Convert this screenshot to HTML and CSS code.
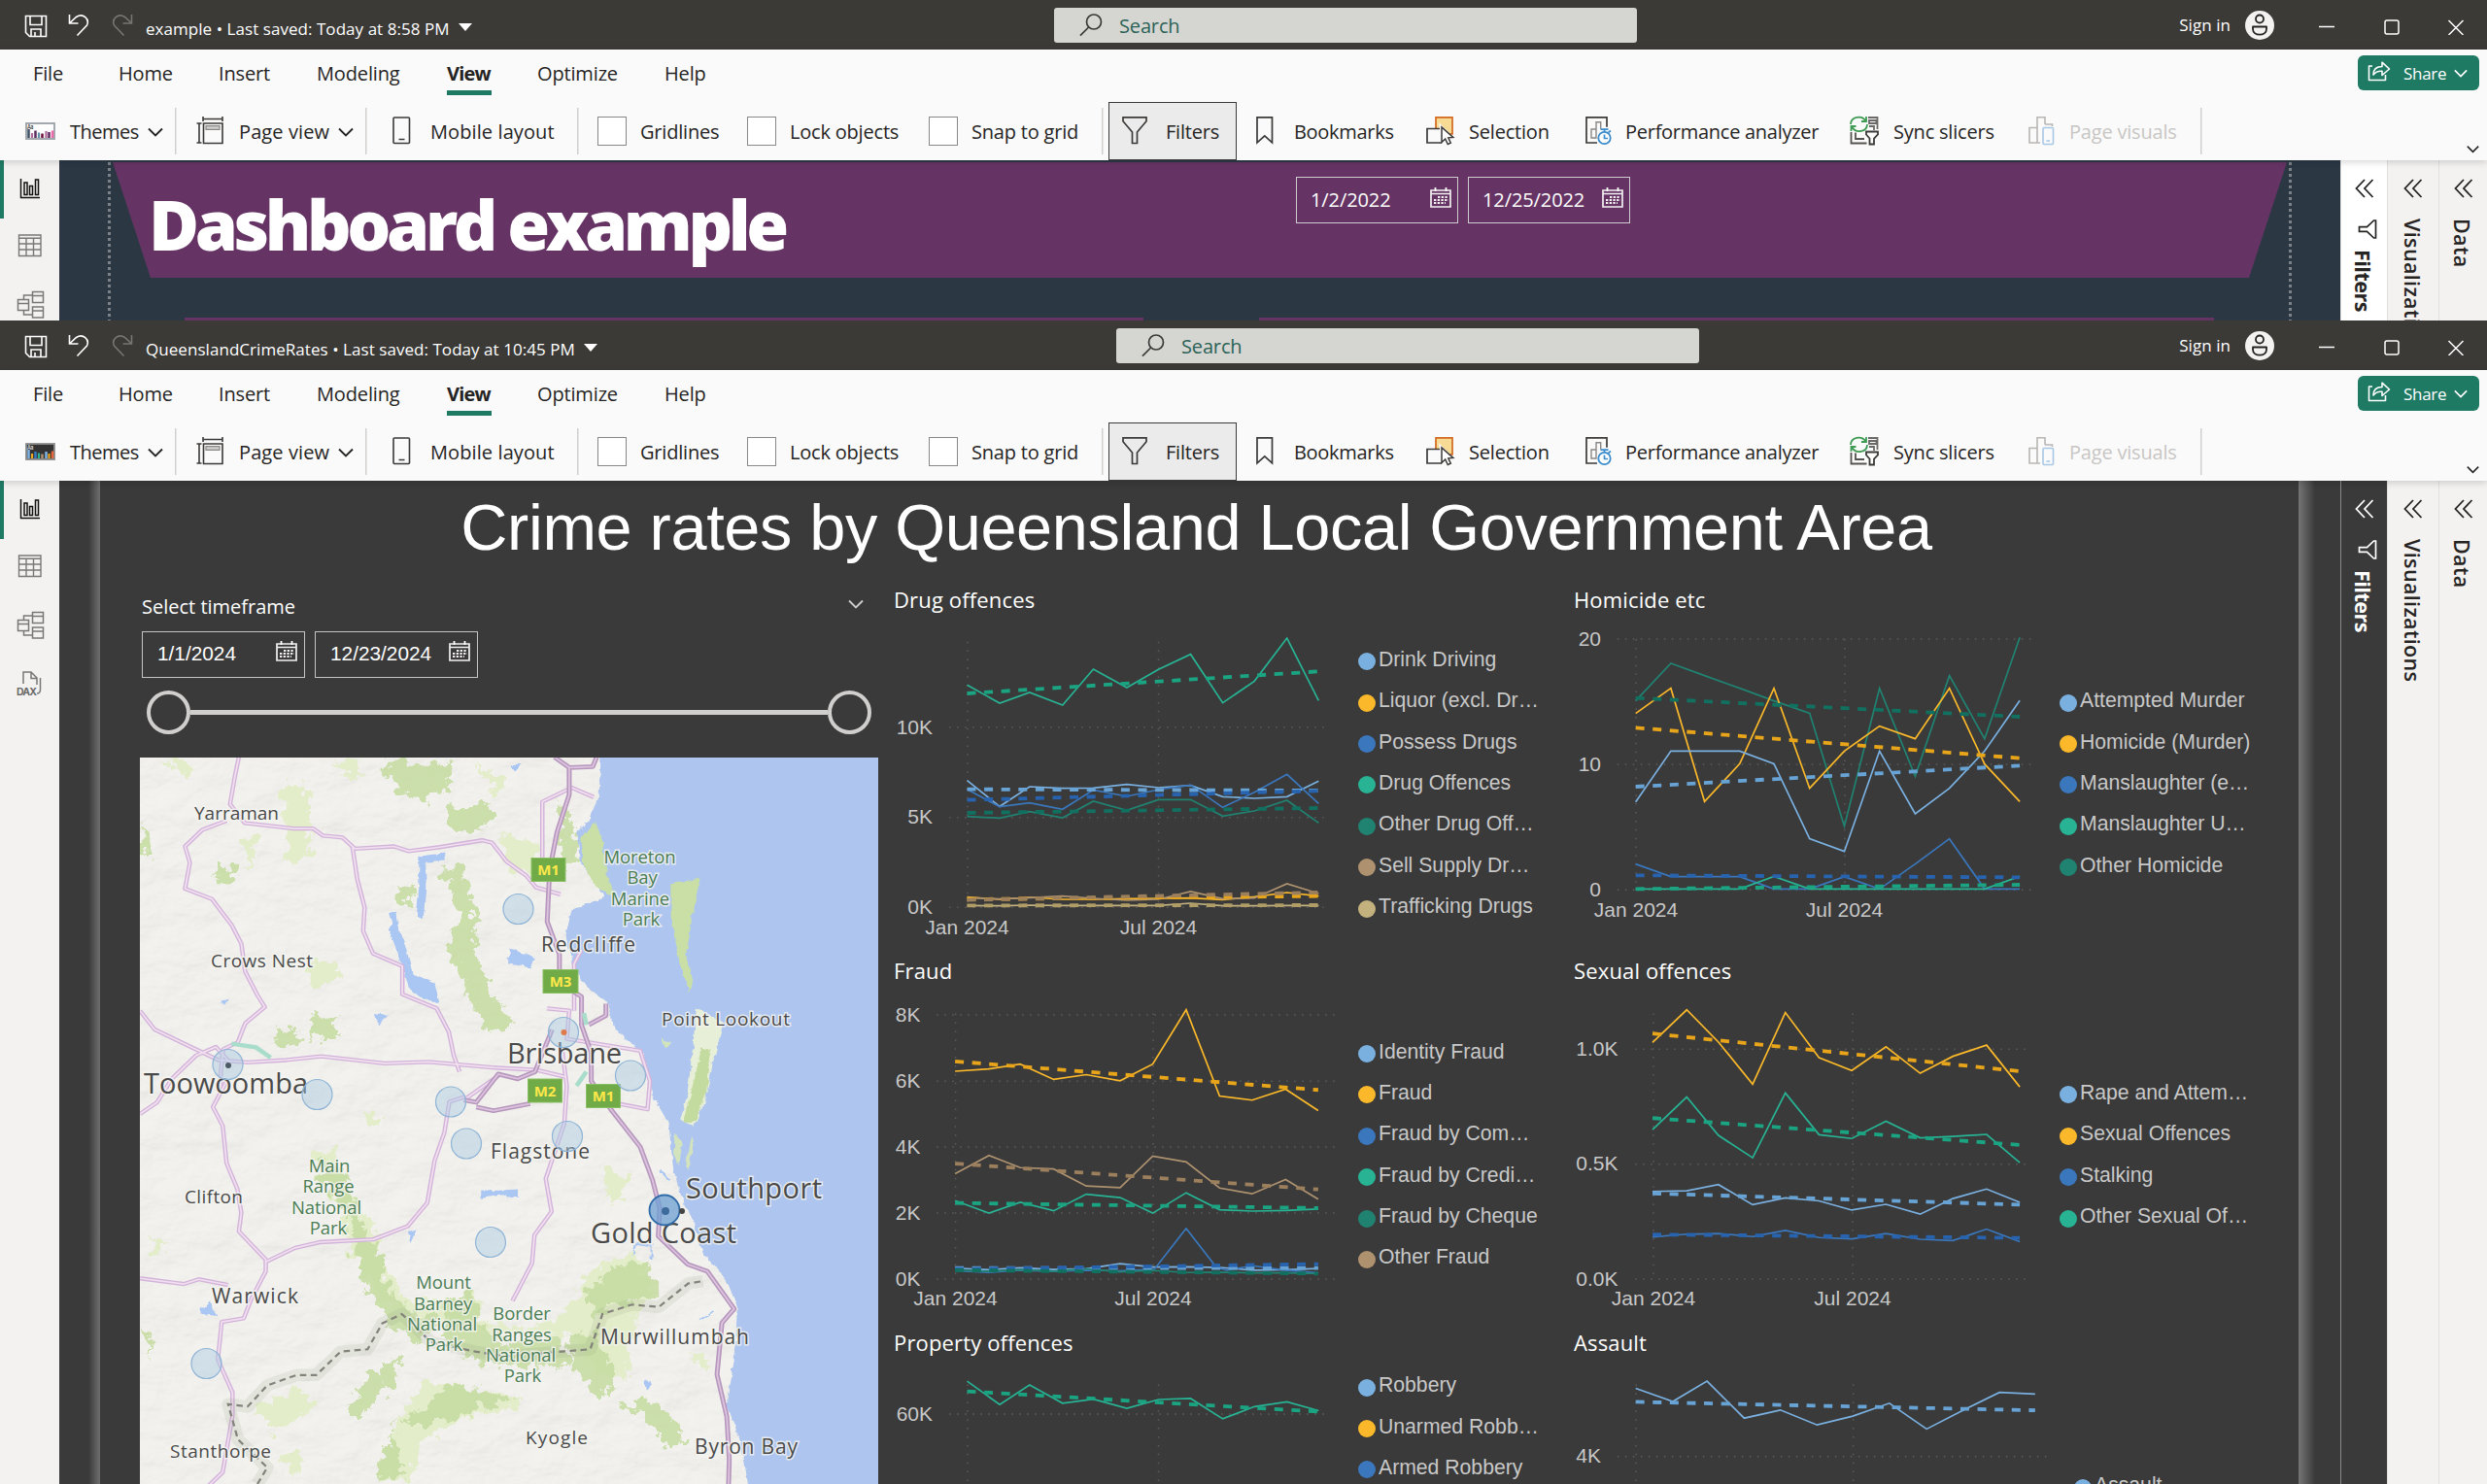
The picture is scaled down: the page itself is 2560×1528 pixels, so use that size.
FILE: index.html
```html
<!DOCTYPE html>
<html lang="en">
<head>
<meta charset="utf-8">
<title>QueenslandCrimeRates</title>
<link rel="stylesheet" href="styles.css">
</head>
<body>
<svg class="defs" width="0" height="0" aria-hidden="true">
  <symbol id="i-save" viewBox="0 0 24 24"><path d="M1.5 1.5h21v21h-17l-4-4zM6 1.500v9h12v-9M7 22v-7h10v7M11 18v4" fill="none" stroke="currentColor" stroke-width="1.600"/></symbol>
  <symbol id="i-undo" viewBox="0 0 22 24"><path d="M1.500 1v9h9M1.500 10l7-6.500c7-4.500 14 2 11 8.500L9.500 22.500" fill="none" stroke="currentColor" stroke-width="1.600"/></symbol>
  <symbol id="i-search" viewBox="0 0 24 24"><circle cx="15" cy="8.500" r="7.500" fill="none" stroke="currentColor" stroke-width="1.700"/><path d="M9.600 14L1 22.700" stroke="currentColor" stroke-width="1.700"/></symbol>
  <symbol id="i-user" viewBox="0 0 30 30"><circle cx="15" cy="15" r="15" fill="#f3f2f1"/><circle cx="15" cy="8.500" r="4" fill="none" stroke="#222" stroke-width="1.800"/><path d="M8 16.500h14v2.500c0 7.500-14 7.500-14 0z" fill="none" stroke="#222" stroke-width="1.800" stroke-linejoin="round"/></symbol>
  <symbol id="i-chev" viewBox="0 0 16 10"><path d="M1 1.500l7 7 7-7" fill="none" stroke="currentColor" stroke-width="1.900"/></symbol>
  <symbol id="i-share" viewBox="0 0 24 22"><path d="M5 6H1.500v14.500h17V15M6 15c0-6 4-8.500 9-8.500V2.200L22.500 9 15 15.500v-4.200c-4-.3-7 1-9 3.700z" fill="none" stroke="currentColor" stroke-width="1.600" stroke-linejoin="round"/></symbol>
  <symbol id="i-page" viewBox="0 0 32 32"><g fill="none" stroke="#3b3a39" stroke-width="1.600"><path d="M7 1v5M27 1v5M7 3.500h20M.5 8h5M.5 28h5M3 8v20"/><path d="M7.500 8h19.500v20.500H7.500z"/><path d="M10 10.700h14v3.600H10z" stroke="#8a8886" fill="#d2d0ce" stroke-width="1.200"/></g></symbol>
  <symbol id="i-mobile" viewBox="0 0 32 32"><rect x="1" y="2" width="16.500" height="26.500" rx="1" fill="none" stroke="#3b3a39" stroke-width="1.600"/><path d="M6.500 24.500h6" stroke="#3b3a39" stroke-width="1.500"/></symbol>
  <symbol id="i-funnel" viewBox="0 0 32 32"><path d="M1 1.800h24v4L15.500 17v11.500h-5V17L1 5.800z" fill="none" stroke="#3b3a39" stroke-width="1.700"/></symbol>
  <symbol id="i-bookmark" viewBox="0 0 32 32"><path d="M1 1.800h15.500v26l-7.700-7-7.800 7z" fill="none" stroke="#3b3a39" stroke-width="1.700"/></symbol>
  <symbol id="i-select" viewBox="0 0 32 32"><path d="M10 1.800h17v17H10z" fill="#f7da94" stroke="#d2691e" stroke-width="1.700"/><path d="M1 13.500h17V28H1z" fill="#fafafa" stroke="#3b3a39" stroke-width="1.700"/><path d="M13 7l17 17-4 2 2 5h-5l-1.500-3-5 3z" fill="#fafafa"/><path d="M16 12v15.500l3.700-3.500 2.600 5.500 3-1.300-2.500-5.400 5-.4z" fill="#fff" stroke="#3b3a39" stroke-width="1.500"/></symbol>
  <symbol id="i-perf" viewBox="0 0 32 32"><path d="M12 28H1V1.800h21v10" fill="none" stroke="#3b3a39" stroke-width="1.700"/><path d="M11 23H6v-9h5zM11 23V6.700h4.700v7" fill="none" stroke="#8a8886" stroke-width="1.400"/><circle cx="19.500" cy="23" r="6.200" fill="#fff" stroke="#3a8ccc" stroke-width="1.800"/><path d="M15.500 14.200h8M19.500 14v3M19.500 19.500v4h3.500M23.500 17.500l2.500-2" fill="none" stroke="#3a8ccc" stroke-width="1.700"/></symbol>
  <symbol id="i-sync" viewBox="0 0 32 32"><g fill="none" stroke-width="1.800"><path d="M19 2h9.500v12M20 5h7.500v3H20zM20 11h5v4" stroke="#6b6967"/><path d="M1.500 17v11.500h16M6 17.500V24h9" stroke="#55534f"/><path d="M17 16.500h12v3l-4 4v6h-4.500v-6l-3.500-4z" fill="#fff" stroke="#3b3a39"/><path d="M17 1v5h-5M1 9c0-8 11.500-10 15.500-3.500M1.500 16v-5h5M18 9c0 8-11.500 9.500-15.500 3" stroke="#3f9b54"/></g></symbol>
  <symbol id="i-visuals" viewBox="0 0 32 32"><g fill="none" stroke-width="1.600"><path d="M9 12.500H1V28h11M9 28V1.800h8V9M17 9h7.500v2" stroke="#b8b6b4"/><rect x="15" y="12.500" width="10.500" height="17" rx="1" stroke="#a9c8e6"/><path d="M18.500 26h3.500" stroke="#a9c8e6"/></g></symbol>
  <symbol id="i-report" viewBox="0 0 28 28"><path d="M4.500 4v19.500H24M8 8v12.500h3V8zM13.500 11.500v9h3v-9zM19.500 5v15.500h3V5z" fill="none" stroke="#111" stroke-width="1.500"/></symbol>
  <symbol id="i-table" viewBox="0 0 28 28"><path d="M2.500 4h22.500v21.500H2.500zM2.500 7.200H25M2.500 13H25M2.500 19H25M10 7.200v18.300M17.500 7.200v18.300" fill="none" stroke="#7a7876" stroke-width="1.400"/></symbol>
  <symbol id="i-model" viewBox="0 0 30 30"><path d="M16.500 1.500h11v11h-11zM16.500 5.500h11M16.500 17h11v11h-11zM16.500 21h11M1.500 9.500h11v11h-11zM1.500 13.500h11M7.500 9.500V5h9M7.500 20.500V25h9" fill="none" stroke="#7a7876" stroke-width="1.500"/></symbol>
  <symbol id="i-collapse" viewBox="0 0 20 20"><path d="M10 1L1.500 10l8.500 9M18.500 1L10 10l8.500 9" fill="none" stroke="currentColor" stroke-width="1.800"/></symbol>
  <symbol id="i-funnel-side" viewBox="0 0 20 20"><path d="M18.500 1v18h-2L9.500 12.300H1.500V7.700h8L16.500 1z" fill="none" stroke="currentColor" stroke-width="1.700"/></symbol>
  <symbol id="i-cal" viewBox="0 0 22 21"><path d="M1 3h20v17H1z" fill="none" stroke="#f3f1f1" stroke-width="1.700"/><path d="M1 6.500h20" stroke="#f3f1f1" stroke-width="1.500"/><path d="M5.500 0v4M16.500 0v4" stroke="#fff" stroke-width="1.800"/><path d="M8 10h11M4 13h15M4 16h12" stroke="#f3f1f1" stroke-width="2" stroke-dasharray="2.300 1.400"/></symbol>
</svg>

<section class="window window-back">
  <header class="titlebar">
    <svg class="t-save"><use href="#i-save"/></svg><svg class="t-undo"><use href="#i-undo"/></svg><svg class="t-redo"><use href="#i-undo"/></svg>
    <div class="doc">example • Last saved: Today at 8:58 PM<i class="tri"></i></div>
    <div class="search"><svg><use href="#i-search"/></svg>Search</div>
    <div class="account">Sign in<svg><use href="#i-user"/></svg></div>
    <svg class="winctl" viewBox="0 0 150 16"><path d="M1 7.500h16M134.500 1l15 15M149.500 1l-15 15" /><rect x="69" y="1" width="14" height="14" rx="2"/></svg>
  </header>
  <div class="ribbon">
    <nav class="tabs"><a class="file">File</a><a class="home">Home</a><a class="insert">Insert</a><a class="modeling">Modeling</a><a class="view">View</a><a class="optimize">Optimize</a><a class="help">Help</a>
      <button class="share"><svg><use href="#i-share"/></svg>Share<svg class="chev"><use href="#i-chev"/></svg></button></nav>
    <div class="tools">
      <div class="tool themes"><svg viewBox="0 0 31 18"><rect x="1" y="1" width="29" height="16" fill="#fff" stroke="#9aa0a6" stroke-width="1.800"/><path d="M3.500 16V7" stroke="#3c5063" stroke-width="2.500"/><path d="M7 16v-5M21.500 16v-7" stroke="#b06a9a" stroke-width="2.200"/><path d="M10.500 16V8.500M24.500 16v-6" stroke="#5d2d5f" stroke-width="2.500"/><path d="M14 16v-5.500" stroke="#5f8fa8" stroke-width="2.200"/><path d="M17.500 16v-4.500" stroke="#6e0f3a" stroke-width="2.500"/><path d="M28 16V8.500" stroke="#f068a8" stroke-width="2.500"/><text x="2" y="6.500" font-size="5.500" font-family="Inter">Aa</text></svg><span>Themes</span><svg class="chev"><use href="#i-chev"/></svg></div>
      <div class="tool pageview sep"><svg><use href="#i-page"/></svg><span>Page view</span><svg class="chev"><use href="#i-chev"/></svg></div>
      <div class="tool mobile sep"><svg><use href="#i-mobile"/></svg><span>Mobile layout</span></div>
      <div class="tool check sep"><i class="box"></i><span>Gridlines</span></div>
      <div class="tool check"><i class="box"></i><span>Lock objects</span></div>
      <div class="tool check"><i class="box"></i><span>Snap to grid</span></div>
      <div class="tool sep"></div>
      <div class="tool filters"><svg><use href="#i-funnel"/></svg><span>Filters</span></div>
      <div class="tool bookmarks"><svg><use href="#i-bookmark"/></svg><span>Bookmarks</span></div>
      <div class="tool selection"><svg><use href="#i-select"/></svg><span>Selection</span></div>
      <div class="tool perf"><svg><use href="#i-perf"/></svg><span>Performance analyzer</span></div>
      <div class="tool sync"><svg><use href="#i-sync"/></svg><span>Sync slicers</span></div>
      <div class="tool visuals"><svg><use href="#i-visuals"/></svg><span>Page visuals</span></div>
      <div class="tool sep last"><svg class="chev"><use href="#i-chev"/></svg></div>
    </div>
  </div>
  <div class="work">
    <aside class="rail"><svg><use href="#i-report"/></svg><svg><use href="#i-table"/></svg><svg class="wide"><use href="#i-model"/></svg></aside>
    <main class="stage stage-blue">
      <div class="sheet">
        <div class="banner">
          <h1>Dashboard example</h1>
          <div class="dates"><div class="date">1/2/2022<svg><use href="#i-cal"/></svg></div><div class="date">12/25/2022<svg><use href="#i-cal"/></svg></div></div>
        </div>
        <div class="strips"><i></i><i></i></div>
      </div>
    </main>
    <aside class="pane pane-filters"><svg><use href="#i-collapse"/></svg><svg class="fn"><use href="#i-funnel-side"/></svg><span>Filters</span></aside>
    <aside class="pane pane-viz"><svg><use href="#i-collapse"/></svg><span>Visualizations</span></aside>
    <aside class="pane pane-data"><svg><use href="#i-collapse"/></svg><span>Data</span></aside>
  </div>
</section>

<section class="window window-front">
  <header class="titlebar">
    <svg class="t-save"><use href="#i-save"/></svg><svg class="t-undo"><use href="#i-undo"/></svg><svg class="t-redo"><use href="#i-undo"/></svg>
    <div class="doc">QueenslandCrimeRates • Last saved: Today at 10:45 PM<i class="tri"></i></div>
    <div class="search"><svg><use href="#i-search"/></svg>Search</div>
    <div class="account">Sign in<svg><use href="#i-user"/></svg></div>
    <svg class="winctl" viewBox="0 0 150 16"><path d="M1 7.500h16M134.500 1l15 15M149.500 1l-15 15" /><rect x="69" y="1" width="14" height="14" rx="2"/></svg>
  </header>
  <div class="ribbon">
    <nav class="tabs"><a class="file">File</a><a class="home">Home</a><a class="insert">Insert</a><a class="modeling">Modeling</a><a class="view">View</a><a class="optimize">Optimize</a><a class="help">Help</a>
      <button class="share"><svg><use href="#i-share"/></svg>Share<svg class="chev"><use href="#i-chev"/></svg></button></nav>
    <div class="tools">
      <div class="tool themes"><svg viewBox="0 0 31 18"><rect x="1" y="1" width="29" height="16" fill="#333" stroke="#8c8c8c" stroke-width="1.800"/><path d="M3.500 16V7M21.500 16v-7" stroke="#7fb2e5" stroke-width="2.500"/><path d="M7 16v-5M24.500 16v-5" stroke="#e9a820" stroke-width="2.200"/><path d="M10.500 16V9" stroke="#3a78c0" stroke-width="2.500"/><path d="M14 16v-5.500" stroke="#2bb594" stroke-width="2.200"/><path d="M17.500 16v-4.500" stroke="#b09372" stroke-width="2.500"/><path d="M28 16V8.500" stroke="#e8663c" stroke-width="2.500"/><text x="2" y="6.500" font-size="5.500" font-family="Inter" fill="#fff">Aa</text></svg><span>Themes</span><svg class="chev"><use href="#i-chev"/></svg></div>
      <div class="tool pageview sep"><svg><use href="#i-page"/></svg><span>Page view</span><svg class="chev"><use href="#i-chev"/></svg></div>
      <div class="tool mobile sep"><svg><use href="#i-mobile"/></svg><span>Mobile layout</span></div>
      <div class="tool check sep"><i class="box"></i><span>Gridlines</span></div>
      <div class="tool check"><i class="box"></i><span>Lock objects</span></div>
      <div class="tool check"><i class="box"></i><span>Snap to grid</span></div>
      <div class="tool sep"></div>
      <div class="tool filters"><svg><use href="#i-funnel"/></svg><span>Filters</span></div>
      <div class="tool bookmarks"><svg><use href="#i-bookmark"/></svg><span>Bookmarks</span></div>
      <div class="tool selection"><svg><use href="#i-select"/></svg><span>Selection</span></div>
      <div class="tool perf"><svg><use href="#i-perf"/></svg><span>Performance analyzer</span></div>
      <div class="tool sync"><svg><use href="#i-sync"/></svg><span>Sync slicers</span></div>
      <div class="tool visuals"><svg><use href="#i-visuals"/></svg><span>Page visuals</span></div>
      <div class="tool sep last"><svg class="chev"><use href="#i-chev"/></svg></div>
    </div>
  </div>
  <div class="work">
    <aside class="rail"><svg><use href="#i-report"/></svg><svg><use href="#i-table"/></svg><svg class="wide"><use href="#i-model"/></svg><svg class="dax" viewBox="0 0 28 28"><path d="M7 14V2h8l6 6v7M15 2v6.500h6M24.500 8v12c0 2.500-1 4-3.500 4" fill="none" stroke="#7a7876" stroke-width="1.500"/><text x="0" y="26" font-family="Inter, sans-serif" font-size="10.500" font-weight="700" fill="#6b6967" textLength="21">DAX</text></svg></aside>
    <main class="stage stage-dark">
      <div class="report">
        <h1>Crime rates by Queensland Local Government Area</h1>
        <div class="body">
          <div class="left">
            <div class="slicer-head">Select timeframe<svg class="chev"><use href="#i-chev"/></svg></div>
            <div class="dates"><div class="date">1/1/2024<svg><use href="#i-cal"/></svg></div><div class="date">12/23/2024<svg><use href="#i-cal"/></svg></div></div>
            <div class="slider"><i class="knob"></i><i class="track"></i><i class="knob"></i></div>
            <svg class="map" viewBox="144 780 760 748">
              <defs>
                <filter id="rough" x="-5%" y="-5%" width="110%" height="110%"><feTurbulence type="fractalNoise" baseFrequency=".045" numOctaves="5" seed="4"/><feDisplacementMap in="SourceGraphic" scale="52" xChannelSelector="R" yChannelSelector="G"/><feGaussianBlur stdDeviation="1.500"/></filter>
                <filter id="coast" x="-5%" y="-5%" width="110%" height="110%"><feTurbulence type="fractalNoise" baseFrequency=".06" numOctaves="3" seed="8"/><feDisplacementMap in="SourceGraphic" scale="11" xChannelSelector="R" yChannelSelector="G"/></filter>
                <filter id="relief" x="0" y="0" width="100%" height="100%"><feTurbulence type="fractalNoise" baseFrequency=".018 .028" numOctaves="5" seed="11" result="n"/><feDiffuseLighting in="n" surfaceScale="5" diffuseConstant="1.050" lighting-color="#f4f4f0"><feDistantLight azimuth="235" elevation="68"/></feDiffuseLighting></filter>
              </defs>
              <rect x="144" y="780" width="760" height="748" fill="#f1f0ec"/>
              <rect x="144" y="780" width="760" height="748" filter="url(#relief)" opacity=".25"/>
              <g transform="translate(130 770) scale(.5038 .4834)">
                <g filter="url(#rough)" fill="#e3edc9">
                  <path d="M320 70l50 10 10 150-50 10-10-80zM80 30l60-5-10 40zM420 30l60-5-10 50zM760 180l80 20 10 80-70-20zM360 470l60-20 20 40-50 20zM480 770l50 20-20 30zM980 890l40 20-10 60-30-10zM240 190l30 0-20 70zM720 40l60 30-30 30z"/>
                  <path d="M370 850l60 10 30 90 50 80 20 90 60 60 130-20 0 60 110 20 70-40 40-80 90-50 40 60-30 110-20 110-50-20-60-80-120 0-130-20-130-50-60-80-40-120z"/>
                  <path d="M260 1400l90-30 40 30-90 60zM310 1500l60 10-20 50zM1150 1290l40 0-5 40zM50 1040l30 20-20 20zM610 1350l150 20 60 30-120 20-100 60-20 80-60 0 20-100z"/>
                </g>
                <g filter="url(#rough)" fill="#c5dca0" opacity=".85">
                  <path d="M530 30h140l-15 60-50 20-70-30zM655 125l90-5 0 50-50 10-40-20zM30 160l22 30-4 40-20 0zM180 250l50 0-20 45-30-10z"/>
                  <path d="M640 255l45 0 25 80 5 110 40 90 40 55-60 15-30-60-30-80-25-40 30-50-10-60z"/>
                  <path d="M375 575l55-5 5 45-60 10zM305 595l50 10 0 30-50-5zM555 290l35 10-10 40-25-5z"/>
                  <path d="M395 880l45 10 20 60 30 90 30 30 10 80 50 50 60 20-40 50-60-40-60-90-20-130-60-90z"/>
                  <path d="M650 1170l60-10 10 60 50 50 50-10 60-10 30 60-60 10-130-10-70-50zM930 1160l80-60 60 0 20 60-70 20-60 30zM900 1260l60-20 40 100-30 50-50-60z"/>
                  <path d="M500 1330l60-30-20 60-70 70-20-20zM545 1440l20 110-50 10zM650 1360l60 0 80 30-80 20-80 30-70 0zM1015 1400l70-10 55 70-30 30-60-70z"/>
                  <path d="M1110 1290l10-30M880 110l40 60 0 80-25 0-10-70zM40 1240l20 20-15 40z"/>
                </g>
                <g filter="url(#coast)">
                  <path fill="#aec6ef" d="M970 10L966 100 948 150 922 180 926 240 960 290 978 318 910 345 898 400 912 460 940 510 985 545 1000 600 1055 650 1075 740 1108 800 1118 900 1135 960 1155 1000 1180 1080 1225 1130 1248 1190 1245 1280 1228 1400 1258 1490 1272 1580H1580V10z"/>
                  <path fill="none" stroke="#aac6f2" stroke-width="14" d="M650 232l-45 5 0 60-5 65M545 350l10 60 20 60"/>
                  <path fill="#aac6f2" d="M535 385l15-15 20 50 15 60 45 20 10 45-35-10-30-25-15-60zM785 425l20 10 30 15-10 18-45-8zM508 565l27 5-20 20zM152 1195l20-15 15 30-35-5zM725 945l75-5 0 20-30-8-45 8zM575 1030l20-5-15 30zM785 35l22 0-12 15zM190 540l20-5-10 12zM1060 1345l14 10-10 15z"/>
                  <path fill="none" stroke="#aac6f2" stroke-width="4" d="M1035 1080l8-25 30 5 0 30M1170 1220l30-20M1090 900l20 20"/>
                </g>
                <g filter="url(#coast)" fill="#c9dfa6">
                  <path d="M958 155l16 45 8 70 20 50-45-25-24-50-5-50z"/>
                  <path d="M1112 290l60-12-18 95-10 70 15 60-8 18-20-60-18-100z"/>
                </g>
                <g filter="url(#coast)">
                  <path d="M1165 555l20 10 35 20-20 80-18 90-22 52-28-15 15-60 10-90z" fill="#e8efd8"/>
                  <path d="M1175 640l20 5-10 90-22 60-25 5 15-60z" fill="#c3db9f"/>
                  <path d="M1155 830l4 10-10 60-6-10zM1095 620l18 8-12 12zM1120 820l15 20-5 50-10-20z" fill="#d3e4bc"/>
                </g>
                <g class="road road-case"><g id="roads"><path d="M230 20l-8 40-10 60 30 40 100 12 40 0 20 15 40 4 25 24 80-5 30 10 60-8 90-15 20 5 30 40 40 30 20 25 50 15"/><path d="M205 155l-50 20-35 35 10 35-10 55 55 22 40 55 20 40 8 60 25 50 15 25-40 35-15 40-30 15-5 50 0 30"/><path d="M462 210l10 70 15 60-3 50 20 48 60 27 0 60 70 30 25 50 10 50 12 35"/><path d="M28 560l30 40 70 35 60 30 60 5 80-5 70-8 130 15 90-3 130 12 90 5 60 15"/><path d="M28 780l35-25 30-50 50-50 40-18 30 35M205 710l-28 55 20 40 8 80 22 55 8 50-5 40 55 60 0 25-30 60-15 40-45 8-8 80 30 70 0 50-20 120-50 50"/><path d="M28 1130l90 12 30-10 60 12M285 1095l60-30 50-12 110-6 70-28 40-50 15-90 20-60 10-65 30-10"/><path d="M690 750l75-55M890 640l10 80-5 80-38 118 12 70-35 50-5 60-40 80"/><path d="M850 240l0-125 60-30 45 20M930 430l-15 30 0 100M860 555l45 5-5 60 150 25 20 65-5 60-75-15"/></g></g>
                <g class="road"><use href="#roads"/></g>
                <g class="hwy hwy-case"><g id="hwys"><path d="M875 20l30 22 48-2 8-20M905 40l0 60-25 80-15 80-5 110 25 70 0 60 45 30 0 60 20 60 0 60 40 60 60 80 25 70 15 60-3 60 60 60 40 15 55 80-25 30-10 110 20 90 5 90-3 110"/><path d="M870 600l-35 90-35 15-40-10-45 60-25-5M715 765l35 8 75-15M945 590l35-20 0-25"/></g></g>
                <g class="hwy"><use href="#hwys"/></g>
                <path d="M215 630l50 8 30 22M935 565l5 25M940 690l-20 30" fill="none" stroke="#a8dccb" stroke-width="9"/>
                <path id="state" d="M268 1568l20-35-60-60-20-75 40 5 40-45 60-22 40 0 50-50 55-5 30-55 40-20 60 60 90 20 60 10 175-15 25-75 60-20 55 5 60-50 30-5" class="state-halo"/>
                <path d="M268 1568l20-35-60-60-20-75 40 5 40-45 60-22 40 0 50-50 55-5 30-55 40-20 60 60 90 20 60 10 175-15 25-75 60-20 55 5 60-50 30-5" class="state"/>
              </g>
              <g class="town">
                <g font-size="19"><text x="200" y="844" textLength="87">Yarraman</text><text x="217" y="996" textLength="105">Crows Nest</text><text x="190" y="1239" textLength="60">Clifton</text><text x="175" y="1501" textLength="104">Stanthorpe</text><text x="681" y="1056" textLength="132">Point Lookout</text><text x="541" y="1487" textLength="64">Kyogle</text></g>
                <g font-size="21"><text x="218" y="1342" textLength="89">Warwick</text><text x="557" y="980" textLength="97">Redcliffe</text><text x="505" y="1193" textLength="102">Flagstone</text><text x="618" y="1384" textLength="153">Murwillumbah</text><text x="715" y="1497" textLength="106">Byron Bay</text></g>
                <g font-size="29"><text x="148" y="1126" textLength="169">Toowoomba</text><text x="522" y="1095" textLength="118">Brisbane</text><text x="706" y="1234" textLength="140">Southport</text><text x="608" y="1280" textLength="150">Gold Coast</text></g>
              </g>
              <g class="park">
                <text x="658.500" y="889">Moreton</text><text x="661" y="910">Bay</text><text x="659" y="932">Marine</text><text x="660" y="953">Park</text>
                <text x="339" y="1207">Main</text><text x="338" y="1228">Range</text><text x="336" y="1250">National</text><text x="338" y="1271">Park</text>
                <text x="456.500" y="1327">Mount</text><text x="456" y="1349">Barney</text><text x="455" y="1370">National</text><text x="457" y="1391">Park</text>
                <text x="537" y="1359">Border</text><text x="537" y="1381">Ranges</text><text x="536" y="1402">National</text><text x="538" y="1423">Park</text>
              </g>
              <g class="shield"><rect x="547" y="883.500" width="35" height="24"/><rect x="559" y="998.500" width="36" height="24"/><rect x="543.500" y="1111" width="35" height="24"/><rect x="603.500" y="1116.500" width="35" height="24"/><text x="564.500" y="901">M1</text><text x="577" y="1016">M3</text><text x="561" y="1128.500">M2</text><text x="621" y="1134">M1</text></g>
              <g class="bubble"><circle cx="533.500" cy="936" r="15.500"/><circle cx="580" cy="1063" r="15.500"/><circle cx="234.500" cy="1096" r="15.500"/><circle cx="326.500" cy="1127" r="15.500"/><circle cx="464" cy="1134.500" r="15.500"/><circle cx="480" cy="1177.500" r="15.500"/><circle cx="584" cy="1170" r="15.500"/><circle cx="649" cy="1107.500" r="15.500"/><circle cx="505" cy="1279" r="15.500"/><circle cx="212.500" cy="1404" r="15.500"/><circle class="on" cx="684" cy="1246" r="15.500"/></g>
              <circle cx="580.500" cy="1063" r="3" fill="#e07b4c"/><circle cx="235" cy="1097" r="3" fill="#4c5a66"/><circle cx="685" cy="1247" r="4" fill="#3d6c9c"/><circle cx="702" cy="1247" r="3" fill="#444"/>
            </svg>
          </div>
          <div class="charts">
            <article class="card"><h2>Drug offences</h2><div class="plot">
              <svg viewBox="904 640 494 342"><g transform="translate(900 590) scale(.45918 .33333)">
                <path class="gx" d="M168 476H1020M168 755H1020M168 1033H1020"/><path class="gy" d="M209 212V1033M637 212V1033"/>
                <polyline class="l tan2" points="208,1027 281,1028 348,1026 422,1027 491,1027 566,1027 637,1027 709,1020 781,1028 852,1028 925,1027 996,1027"/>
                <polyline class="l yel" points="208,1001 281,1008 348,1002 422,1008 491,1008 566,1006 637,1005 709,1004 781,1009 852,1000 925,987 996,998"/>
                <polyline class="l tan" points="208,1003 281,1007 348,1003 422,998 491,1005 566,1011 637,1008 709,984 781,1006 852,1004 925,960 996,990"/>
                <polyline class="l grn" points="208,346 281,402 348,369 422,408 491,297 566,354 637,298 709,251 781,401 852,334 925,201 996,394"/>
                <polyline class="l lbl" points="208,641 281,721 348,660 422,665 491,664 566,653 637,663 709,656 781,691 852,696 925,691 996,643"/>
                <polyline class="l blu" points="208,668 281,722 348,710 422,730 491,670 566,690 637,669 709,655 781,724 852,677 925,622 996,712"/>
                <polyline class="l dgr" points="208,752 281,757 348,737 422,756 491,705 566,733 637,700 709,700 781,751 852,735 925,702 996,772"/>
                <path class="t lbl" d="M208 668L996 672"/><path class="t yel" d="M208 1008L996 998"/><path class="t blu" d="M208 701L996 673"/><path class="t grn" d="M208 372L996 304"/><path class="t dgr" d="M208 741L996 726"/><path class="t tan" d="M208 1010L996 987"/><path class="t tan2" d="M208 1027L996 1026"/></g>
                <g class="ax"><text class="e" x="960" y="756">10K</text><text class="e" x="960" y="848">5K</text><text class="e" x="960" y="941">0K</text><text x="995.500" y="962">Jan 2024</text><text x="1192.500" y="962">Jul 2024</text></g></svg>
              <ul class="legend"><li class="lbl">Drink Driving</li><li class="yel">Liquor (excl. Dr…</li><li class="blu">Possess Drugs</li><li class="grn">Drug Offences</li><li class="dgr">Other Drug Off…</li><li class="tan">Sell Supply Dr…</li><li class="tan2">Trafficking Drugs</li></ul>
            </div></article>
            <article class="card"><h2>Homicide etc</h2><div class="plot">
              <svg viewBox="1600 640 520 342"><g transform="translate(1600 590) scale(.5102 .33333)">
                <path class="gx" d="M127 204H963M127 591H963M127 979H963"/><path class="gy" d="M165 204V979M586 204V979"/>
                <polyline class="l dgr" points="164,395 235,279 303,317 374,356 443,395 515,433 585,782 656,356 728,628 797,317 868,512 939,199"/>
                <polyline class="l yel" points="164,434 235,356 303,706 374,589 443,356 515,665 585,550 656,473 728,512 797,356 868,590 939,706"/>
                <polyline class="l lbl" points="164,707 235,550 303,550 374,550 443,589 515,821 585,860 656,550 728,744 797,665 868,550 939,394"/>
                <polyline class="l blu" points="164,899 235,938 303,938 374,938 443,976 515,976 585,938 656,976 728,899 797,821 868,976 939,976"/>
                <polyline class="l grn" points="164,976 374,976 443,937 515,976 868,976 939,937"/>
                <path class="t lbl" d="M164 660L939 595"/><path class="t yel" d="M164 478L939 572"/><path class="t blu" d="M164 934L939 940"/><path class="t grn" d="M164 976L939 963"/><path class="t dgr" d="M164 386L939 444"/></g>
                <g class="ax"><text class="e" x="1648" y="665">20</text><text class="e" x="1648" y="794">10</text><text class="e" x="1648" y="923">0</text><text x="1684" y="944">Jan 2024</text><text x="1898.500" y="944">Jul 2024</text></g></svg>
              <ul class="legend"><li class="lbl">Attempted Murder</li><li class="yel">Homicide (Murder)</li><li class="blu">Manslaughter (e…</li><li class="grn">Manslaughter U…</li><li class="dgr">Other Homicide</li></ul>
            </div></article>
            <article class="card"><h2>Fraud</h2><div class="plot">
              <svg viewBox="904 1022 494 343"><g transform="translate(900 980) scale(.45918 .34949)">
                <path class="gx" d="M140 186H1032M140 381H1032M140 575H1032M140 770H1032M140 964H1032"/><path class="gy" d="M182 182V968M625 182V968"/>
                <polyline class="l yel" points="181,352 257,345 327,331 402,376 475,362 551,380 624,331 699,171 774,425 847,437 922,405 995,468"/>
                <polyline class="l tan" points="181,654 257,600 327,636 402,640 475,690 551,695 624,602 699,619 774,696 847,713 922,671 995,729"/>
                <polyline class="l grn" points="181,733 257,770 327,738 402,763 475,714 551,724 624,770 699,710 774,760 847,764 922,762 995,758"/>
                <polyline class="l lbl" points="181,932 257,937 327,931 402,936 475,934 551,919 624,929 699,928 774,930 847,938 922,937 995,933"/>
                <polyline class="l blu" points="181,940 257,945 327,938 402,942 475,938 551,940 628,935 699,815 767,930 790,938 847,925 922,938 995,946"/>
                <polyline class="l dgr" points="181,938 257,942 327,937 402,941 475,934 551,943 624,939 699,945 774,944 847,946 922,946 995,948"/>
                <path class="t lbl" d="M181 932L995 932"/><path class="t yel" d="M181 323L995 407"/><path class="t blu" d="M181 935L995 920"/><path class="t grn" d="M181 740L995 755"/><path class="t dgr" d="M181 938L995 948"/><path class="t tan" d="M181 624L995 700"/></g>
                <g class="ax"><text class="e" x="947.500" y="1052">8K</text><text class="e" x="947.500" y="1120">6K</text><text class="e" x="947.500" y="1188">4K</text><text class="e" x="947.500" y="1256">2K</text><text class="e" x="947.500" y="1324">0K</text><text x="983.500" y="1344">Jan 2024</text><text x="1187" y="1344">Jul 2024</text></g></svg>
              <ul class="legend"><li class="lbl">Identity Fraud</li><li class="yel">Fraud</li><li class="blu">Fraud by Com…</li><li class="grn">Fraud by Credi…</li><li class="dgr">Fraud by Cheque</li><li class="tan">Other Fraud</li></ul>
            </div></article>
            <article class="card"><h2>Sexual offences</h2><div class="plot">
              <svg viewBox="1600 1022 520 343"><g transform="translate(1600 980) scale(.5102 .34949)">
                <path class="gx" d="M163 287H963M163 626H963M163 964H963"/><path class="gy" d="M200 182V968M602 182V968"/>
                <polyline class="l yel" points="198,267 267,171 331,266 400,390 466,179 534,312 600,350 669,280 738,358 804,308 872,275 939,398"/>
                <polyline class="l grn" points="198,524 267,428 331,541 400,607 466,416 534,539 600,550 669,499 738,548 804,544 872,538 939,621"/>
                <polyline class="l lbl" points="198,706 267,704 331,686 400,745 466,725 534,734 600,761 669,744 738,773 804,727 872,699 939,738"/>
                <polyline class="l blu" points="198,840 267,832 331,830 400,839 466,821 534,842 600,846 669,830 738,847 804,851 872,817 939,854"/>
                <path class="t lbl" d="M198 712L939 745"/><path class="t yel" d="M198 241L939 352"/><path class="t blu" d="M198 833L939 843"/><path class="t grn" d="M198 490L939 569"/></g>
                <g class="ax"><text class="e" x="1665.500" y="1087">1.0K</text><text class="e" x="1665.500" y="1205">0.5K</text><text class="e" x="1665.500" y="1324">0.0K</text><text x="1702" y="1344">Jan 2024</text><text x="1907" y="1344">Jul 2024</text></g></svg>
              <ul class="legend"><li class="lbl">Rape and Attem…</li><li class="yel">Sexual Offences</li><li class="blu">Stalking</li><li class="grn">Other Sexual Of…</li></ul>
            </div></article>
            <article class="card"><h2>Property offences</h2><div class="plot">
              <svg viewBox="904 1405 494 342"><g transform="translate(900 980) scale(.45918 .34949)">
                <path class="gx" d="M168 1362H1020"/><path class="gy" d="M209 1275V2100M637 1275V2100"/>
                <polyline class="l grn" points="208,1265 281,1334 348,1276 422,1330 491,1318 566,1345 637,1319 709,1316 781,1376 852,1340 925,1326 996,1352"/>
                <path class="t grn" d="M208 1295L996 1355"/></g>
                <g class="ax"><text class="e" x="960" y="1463">60K</text></g></svg>
              <ul class="legend top"><li class="lbl">Robbery</li><li class="yel">Unarmed Robb…</li><li class="blu">Armed Robbery</li></ul>
            </div></article>
            <article class="card"><h2>Assault</h2><div class="plot">
              <svg viewBox="1600 1405 535 342" class="wide-plot"><g transform="translate(1600 980) scale(.5102 .34949)">
                <path class="gx" d="M127 1487H998"/><path class="gy" d="M165 1275V2100M603 1275V2100"/>
                <polyline class="l lbl" points="164,1286 239,1325 308,1265 383,1374 456,1350 530,1394 602,1368 676,1330 751,1406 823,1352 898,1298 970,1303"/>
                <path class="t lbl" d="M164 1326L970 1351"/></g>
                <g class="ax"><text class="e" x="1648" y="1506">4K</text></g></svg>
              <ul class="legend mid"><li class="lbl">Assault</li></ul>
            </div></article>
          </div>
        </div>
      </div>
    </main>
    <aside class="pane pane-filters"><svg><use href="#i-collapse"/></svg><svg class="fn"><use href="#i-funnel-side"/></svg><span>Filters</span></aside>
    <aside class="pane pane-viz"><svg><use href="#i-collapse"/></svg><span>Visualizations</span></aside>
    <aside class="pane pane-data"><svg><use href="#i-collapse"/></svg><span>Data</span></aside>
  </div>
</section>
</body>
</html>
```
FILE: styles.css
```css
* { box-sizing: border-box; }
body { margin: 0; width: 2560px; height: 1528px; overflow: hidden; font-family: "Open Sans", "Noto Sans", sans-serif; color: #252423; }
.defs { display: block; }
svg { flex: none; display: block; }
h1, h2, ul { margin: 0; padding: 0; font-weight: 400; }
.window { display: flex; flex-direction: column; overflow: hidden; background: #fafafa; }
.window-back { height: 330px; }
.window-front { height: 1198px; }

/* title bar */
.titlebar { height: 51px; flex: none; background: #3b3a37; color: #fff; display: grid; grid-template-columns: 45px 45px 35px 935px 600px 1fr 167px 24px; padding-left: 25px; font-size: 17px; letter-spacing: .05px; align-items: center; }
.window-front .titlebar { grid-template-columns: 45px 45px 35px 999px 600px 1fr 167px 24px; }
.t-save { width: 24px; height: 24px; margin-top: 2px; }
.t-undo, .t-redo { width: 22px; height: 24px; }
.t-redo { transform: scaleX(-1); color: #777572; }
.doc { display: flex; align-items: center; padding-top: 7px; gap: 9px; }
.tri { border: 7px solid transparent; border-top: 8px solid #fff; border-bottom: 0; margin-top: -3px; }
.search { height: 36px; background: #d5d5d2; border-radius: 3px; color: #2b6356; display: flex; align-items: center; gap: 17px; padding-left: 26px; font-size: 20px; margin-top: 1px; letter-spacing: -.15px; }
.search svg { width: 24px; height: 24px; color: #3b3a39; }
.account { display: flex; align-items: center; justify-content: flex-end; gap: 15px; padding-right: 28px; }
.account svg { width: 30px; height: 30px; }
.winctl { width: 150px; height: 16px; margin-top: 4px; fill: none; stroke: #fff; stroke-width: 1.5; margin-left: 17px; }

/* ribbon */
.ribbon { height: 114px; flex: none; background: #fafafa; position: relative; z-index: 1; box-shadow: 0 2px 7px rgba(0,0,0,.16); }
.tabs { height: 54px; display: flex; padding-left: 34px; font-size: 20px; letter-spacing: -.15px; }
.tabs a { line-height: 50px; height: 47px; flex: none; white-space: nowrap; }
.file { width: 88px; } .home { width: 103px; } .insert { width: 101px; } .modeling { width: 134px; }
.tabs .view { width: 46px; margin-right: 47px; font-weight: 700; letter-spacing: -.8px; border-bottom: 5px solid #1f7a64; }
.optimize { width: 131px; }
.share { margin: 6px 8px 0 auto; width: 125px; height: 36px; border: 0; border-radius: 6px; background: #1f7a64; color: #fff; font: 17px "Open Sans", sans-serif; letter-spacing: -.3px; display: flex; align-items: center; padding: 0 0 0 10px; }
.share svg { width: 24px; height: 22px; margin: -4px 13px 0 0; }
.share .chev { width: 14px; height: 9px; margin: 1px 0 0 8px; }
.tools { height: 60px; padding-left: 26px; display: grid; grid-template-columns: 154px 196px 218px 175px 187px 178px 7px 132px 195px 164px 272px 184px 177px 1fr; font-size: 20px; letter-spacing: -.2px; }
.tool { display: flex; align-items: center; white-space: nowrap; }
.tool span { padding-top: 1px; }
.tool.sep { background: linear-gradient(#d2d0ce, #d2d0ce) 0 6px / 1.5px 48px no-repeat; }
.tool svg { width: 32px; height: 32px; margin-right: 12px; }
.tool .chev { width: 16px; height: 10px; margin: 2px 0 0 9px; color: #252423; }
.tool.themes { letter-spacing: -.5px; }
.tool.themes > svg:first-child { width: 31px; height: 18px; margin-right: 15px; }
.pageview { padding-left: 22px; letter-spacing: .1px; }
.mobile { padding-left: 28px; letter-spacing: .1px; }
.mobile svg { margin-right: 7px; }
.check.sep { padding-left: 21px; }
.box { width: 30px; height: 30px; border: 1.5px solid #8a8886; background: #fff; margin-right: 14px; }
.filters { background: #ebebeb; border: 1.500px solid #3b3a39; padding-left: 13px; }
.filters svg { margin-right: 13px; }
.bookmarks { padding-left: 20px; letter-spacing: -.3px; }
.bookmarks svg { margin-right: 7px; }
.perf { letter-spacing: -.27px; }
.perf svg { margin-right: 9px; }
.sync svg { margin-right: 13px; }
.visuals { color: #c8c6c4; }
.visuals svg { margin-right: 10px; }
.tool.last { justify-content: flex-end; padding: 35px 8px 0 0; }
.tool.last .chev { width: 13px; height: 9px; }

/* work area */
.work { flex: 1; min-height: 0; display: grid; grid-template-columns: 61px 1fr 48px 53px 50px; }
.rail { background: linear-gradient(#1f7a64, #1f7a64) 0 0 / 4px 60px no-repeat #f3f2f1; padding: 15px 0 0 17px; overflow: hidden; display: flex; flex-direction: column; gap: 30px; }
.rail svg { width: 28px; height: 28px; }
.rail .wide { width: 30px; height: 30px; margin-top: 3px; }
.rail .dax { margin-top: 1px; }
.pane { background: #f3f2f1; border-left: 1px solid #e1dfdd; padding-top: 19px; overflow: hidden; display: flex; flex-direction: column; align-items: center; font-size: 21.500px; font-weight: 600; color: #252423; }
.pane svg { width: 20px; height: 20px; }
.pane span { writing-mode: vertical-rl; line-height: 30px; margin: 21px 3px 0 0; white-space: nowrap; letter-spacing: .35px; }
.pane svg.fn { margin: 22px 0 0 6px; }
.pane-filters { background: #fff; font-weight: 700; }
.pane-filters span { margin-top: 11px; letter-spacing: -.5px; }
.window-front .pane-filters { background: #3a3a3a; color: #fff; border-color: #8a8a8a; }

/* blue dashboard */
.stage { overflow: hidden; min-width: 0; }
.stage-blue { background: #2b3844; padding: 2px 50px 0; }
.sheet { height: 100%; border: solid transparent; border-width: 0 3px; background: repeating-linear-gradient(#7c8288 0 3px, transparent 3px 6px) 0 0 / 3px 100% border-box no-repeat, repeating-linear-gradient(#7c8288 0 3px, transparent 3px 6px) 100% 0 / 3px 100% border-box no-repeat; padding: 0 2px; }
.banner { height: 119px; background: #663464; clip-path: polygon(0 0, 100% 0, calc(100% - 39px) 100%, 39px 100%); display: flex; padding: 0 0 0 37px; }
.banner h1 { width: 1181px; color: #fff; font-size: 71px; line-height: 119px; padding-top: 4px; font-weight: 800; letter-spacing: -4.400px; }
.dates { display: flex; gap: 10px; }
.banner .dates { padding-top: 15px; }
.date { width: 167px; height: 48px; border: 1.500px solid #cfcccf; color: #fff; font-size: 20px; display: flex; align-items: center; justify-content: space-between; padding: 0 6px 1px 14px; letter-spacing: -.1px; }
.date svg { width: 22px; height: 21px; margin-top: -5px; }
.strips { display: flex; gap: 119px; padding: 41px 0 0 74px; }
.strips i { height: 3px; width: 987px; background: #663464; }
.strips i + i { width: 983px; }

/* crime report */
.stage-dark { background: linear-gradient(90deg, #3a3a3a 30px, #6f6f6f 42px, #3a3a3a 42px, #3a3a3a 2305px, #757575 2305px, #3a3a3a 2322px); padding: 0 43px 0 42px; }
.report h1 { color: #fff; font: 66.700px/96px "Liberation Sans", Arial, sans-serif; letter-spacing: -.35px; height: 105px; text-align: center; white-space: nowrap; padding-right: 6px; }
.body { display: grid; grid-template-columns: 760px 1462px; padding-left: 41px; }
.slicer-head { color: #fff; font-size: 20px; height: 50px; line-height: 49px; padding: 0 15px 2px 2px; display: flex; justify-content: space-between; align-items: center; letter-spacing: 0; }
.slicer-head .chev { width: 16px; height: 10px; color: #ccc; margin-top: -5px; }
.left .dates { padding-left: 2px; }
.left .date { font: 20.800px "Liberation Sans", Arial, sans-serif; width: 168px; padding: 0 7px 2px 15px; border-color: #c4c4c4; letter-spacing: 0; }
.slider { display: flex; align-items: center; margin: 13px 7px 24px; height: 45px; }
.knob { width: 45px; height: 45px; border: 4px solid #d0cfce; border-radius: 50%; flex: none; }
.track { flex: 1; height: 5px; background: #d0cfce; }
.map { width: 760px; height: 748px; }
.road, .hwy { fill: none; stroke: #f0e0ef; stroke-width: 3.500; stroke-linejoin: round; }
.road-case { stroke: #d3b3da; stroke-width: 9; }
.hwy { stroke: #dcc4df; stroke-width: 3.500; }
.hwy-case { stroke: #b797bd; stroke-width: 10; }
.state-halo { fill: none; stroke: #8d9a80; stroke-opacity: .14; stroke-width: 26; stroke-linejoin: round; }
.state { fill: none; stroke: #83837c; stroke-width: 4.5; stroke-dasharray: 13 9; }
.town text, .park text { paint-order: stroke; stroke: #f5f5f2; stroke-opacity: .8; stroke-width: 3px; fill: #4a4a4a; }
.park text { fill: #4b7d55; font-size: 18.500px; text-anchor: middle; letter-spacing: -.1px; }
.shield rect { fill: #70ab48; stroke: #8abf66; }
.shield text { fill: #ffe84a; font-size: 15px; font-weight: 700; text-anchor: middle; }
.bubble circle { fill: #a9c9e3; fill-opacity: .45; stroke: #8fb4d6; stroke-width: 1.200; }
.bubble .on { fill: #6d9fd3; fill-opacity: .75; stroke: #2f6ba8; stroke-width: 1.800; }

/* charts */
.charts { display: grid; grid-template-columns: 696px 766px; grid-template-rows: 382px 383px 382px; }
.card { display: flex; flex-direction: column; }
.card h2 { color: #fff; font-size: 22px; height: 40px; line-height: 35px; padding-left: 16px; letter-spacing: .15px; }
.card:nth-child(even) h2 { padding-left: 20px; }
.plot { display: flex; align-items: center; flex: 1; }
.plot svg { width: 494px; height: 100%; }
.card:nth-child(even) svg { width: 520px; }
.card:nth-child(even) svg.wide-plot { width: 535px; }
.legend { list-style: none; color: #c8c8c8; font: 21.200px "Liberation Sans", Arial, sans-serif; padding-bottom: 8px; }
.legend li { display: flex; align-items: center; gap: 3px; height: 42.400px; line-height: 38px; padding-bottom: 2px; white-space: nowrap; }
.legend li::before { content: ""; width: 18px; height: 18px; border-radius: 50%; background: var(--c); flex: none; margin-top: 5px; }
.legend.top { align-self: flex-start; padding-top: 1px; }
.legend.mid { align-self: flex-start; padding-top: 104px; }
.lbl { --c: #7ab0e0; --d: #68a3d6; } .yel { --c: #fab82a; --d: #e8a51a; } .blu { --c: #3a77bd; --d: #2763ae; } .grn { --c: #27b394; --d: #1aa482; } .dgr { --c: #208372; --d: #11705f; } .tan { --c: #ae9270; --d: #9c7f5c; } .tan2 { --c: #c3b27d; --d: #b09d66; }
.l { fill: none; stroke: var(--c); stroke-width: 1.700; vector-effect: non-scaling-stroke; }
.t { stroke: var(--d); stroke-width: 3.800; stroke-dasharray: 9 8.600; vector-effect: non-scaling-stroke; }
.gx, .gy { fill: none; stroke: #5c5c5c; stroke-width: 1.500; stroke-dasharray: 1.500 6.500; vector-effect: non-scaling-stroke; }
.gy { stroke-dasharray: 1.500 7.400; }
.ax text { font: 21px "Liberation Sans", Arial, sans-serif; fill: #c8c8c8; text-anchor: middle; }
.ax .e { text-anchor: end; }
```
